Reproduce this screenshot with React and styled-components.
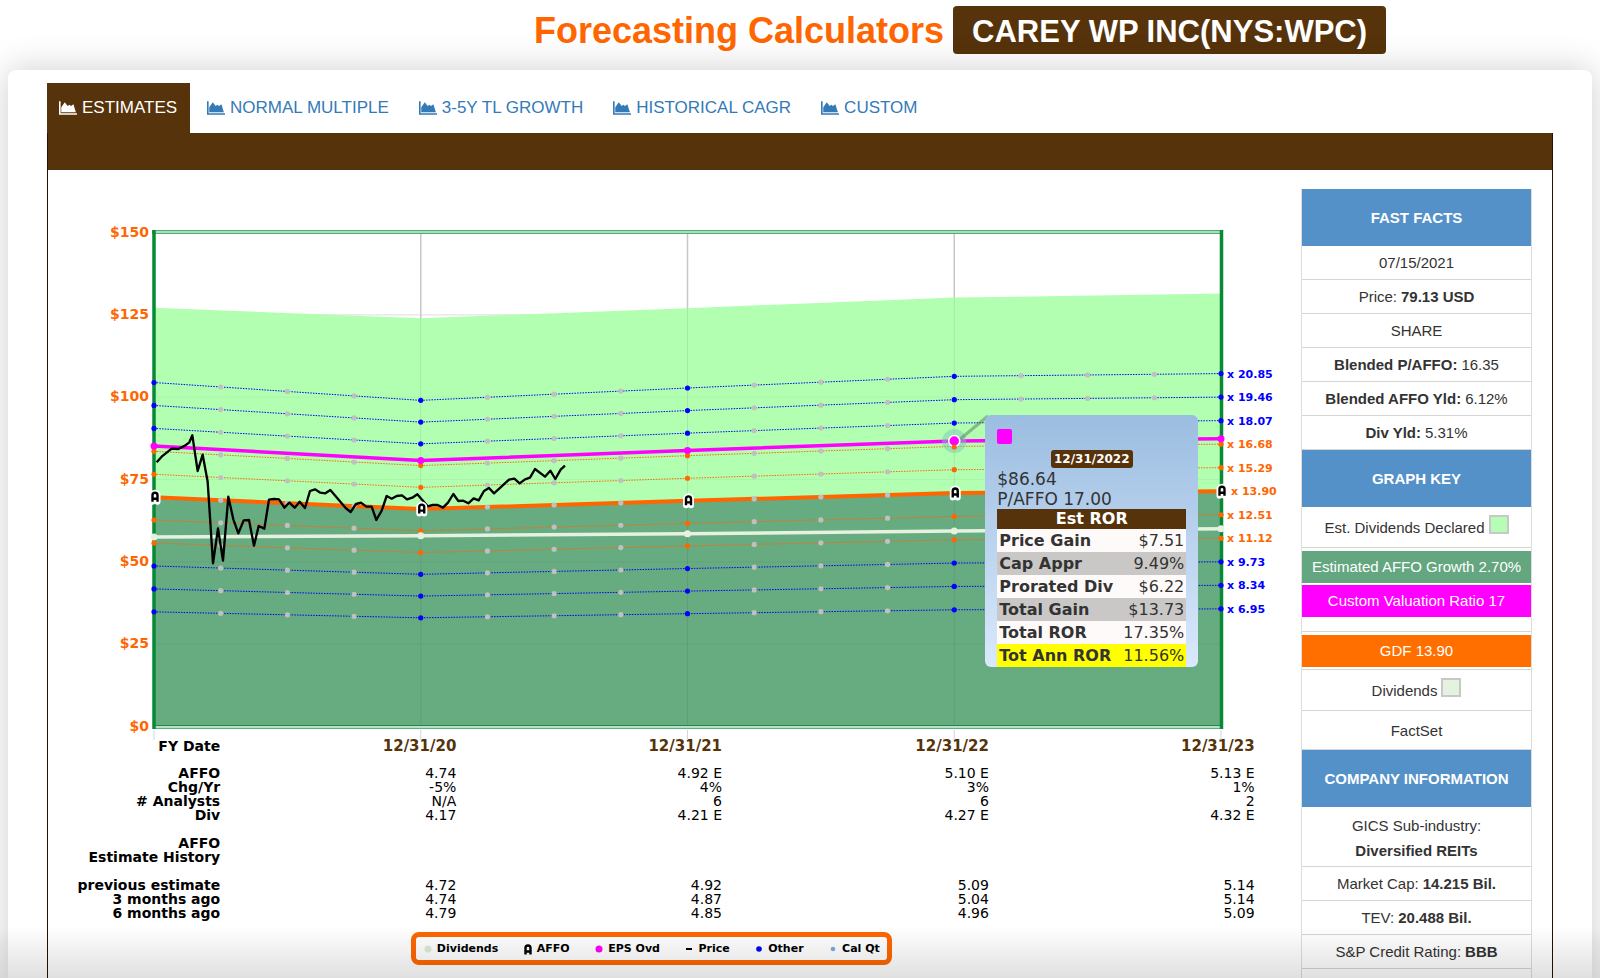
import React from "react";
import styled, { createGlobalStyle } from "styled-components";

const BROWN = "#56330a";
const ORANGE = "#ff6600";
const BLUE = "#0000ff";
const MAGENTA = "#ff00ff";
const UI = `"Liberation Sans", Arial, sans-serif`;
const CHART = `"DejaVu Sans", Verdana, sans-serif`;

const GlobalStyle = createGlobalStyle`
  *, *::before, *::after { box-sizing: border-box; }
  body { margin: 0; background: #fff; color: #333; font-family: ${UI}; }
`;

const Page = styled.div`
  min-height: 100vh;
  display: flex;
  flex-direction: column;
`;

const Header = styled.header`
  display: flex;
  align-items: center;
  justify-content: center;
  gap: 9px;
  padding: 6px 0 16px 20%;
`;

const Title = styled.h1`
  margin: 0;
  padding-top: 2px;
  color: ${ORANGE};
  font-size: 36px;
  line-height: 46px;
  font-weight: 700;
  white-space: nowrap;
`;

const CompanyBadge = styled.span`
  padding: 4px 19px 0;
  border-radius: 4px;
  background: ${BROWN};
  color: #fff;
  font-size: 31px;
  line-height: 44px;
  font-weight: 700;
  white-space: nowrap;
`;

const Card = styled.main`
  flex: 1;
  display: flex;
  flex-direction: column;
  margin: 0 8px;
  padding: 13px 39px 0;
  border-radius: 8px 8px 0 0;
  background: #fff;
  box-shadow: 0 0 36px rgba(0, 0, 0, 0.2);
`;

const Tabs = styled.nav`
  display: flex;
  gap: 5px;
`;

const Tab = styled.button`
  display: flex;
  align-items: center;
  gap: 5px;
  height: 50px;
  padding: 0 13px 0 12px;
  border: 0;
  background: ${(p) => (p.$active ? BROWN : "transparent")};
  color: ${(p) => (p.$active ? "#fff" : "#337ab7")};
  font: 17px ${UI};
  white-space: nowrap;
  cursor: pointer;
`;

const TabPanel = styled.section`
  flex: 1;
  display: flex;
  flex-direction: column;
  border: 1px solid #2b0f00;
  border-top: 0;
  border-bottom: 0;
`;

const Band = styled.div`
  height: 37px;
  background: ${BROWN};
`;

const Content = styled.div`
  flex: 1;
  display: grid;
  grid-template-columns: minmax(0, 1fr) 231px;
  gap: 7px;
  padding: 19px 20px 0 16px;
`;

const ChartColumn = styled.div`
  padding-top: 11px;
`;

const ChartArea = styled.div`
  position: relative;
`;

const ChartSvg = styled.svg`
  display: block;
  width: 100%;
  height: auto;
  font-family: ${CHART};
  font-weight: 700;
`;

const Tooltip = styled.div`
  position: absolute;
  left: 74.9%;
  top: 39.8%;
  width: 213px;
  display: flex;
  flex-direction: column;
  padding: 14px 12px 0;
  border-radius: 6px;
  background: linear-gradient(#9bbde0, #dae9fd);
  color: #333;
  font: 17px/20px ${CHART};
`;

const TooltipSwatch = styled.span`
  width: 15px;
  height: 15px;
  border-radius: 2px;
  background: ${MAGENTA};
`;

const TooltipDate = styled.strong`
  align-self: center;
  margin: 6px 0 1px;
  padding: 0 3px;
  border-radius: 3px;
  background: ${BROWN};
  color: #fff;
  font-size: 12px;
  line-height: 18px;
`;

const RorTable = styled.table`
  width: 100%;
  border-collapse: collapse;
  font-size: 16px;
  line-height: 23px;

  caption {
    background: ${BROWN};
    color: #fff;
    font-weight: 700;
    line-height: 20px;
  }
  th, td { padding: 0 2px; white-space: nowrap; }
  th { text-align: left; }
  td { text-align: right; }
`;

const RorRow = styled.tr`
  background: ${(p) => p.$fill};
`;

const EstimateTable = styled.table`
  width: 100%;
  table-layout: fixed;
  border-collapse: collapse;
  color: #000;
  font: 14px/14px ${CHART};

  th, td { padding: 0; text-align: right; white-space: nowrap; }
  tbody tr { height: 14px; }
  thead th {
    height: 26px;
    color: ${BROWN};
    font-size: 15px;
    line-height: 12px;
    vertical-align: top;
  }
  thead th:first-child { color: #000; font-size: 14px; }
`;

const Legend = styled.ul`
  display: flex;
  align-items: center;
  justify-content: space-between;
  width: 481px;
  height: 33px;
  margin: 12px 0 0 28.2%;
  padding: 0 7px;
  border: 5px solid ${ORANGE};
  border-radius: 8px;
  list-style: none;
  color: #000;
  font: 700 11px ${CHART};
`;

const LegendItem = styled.li`
  display: flex;
  align-items: center;
  gap: 4px;
`;

const Sidebar = styled.aside`
  display: flex;
  flex-direction: column;
  border: 1px solid #ddd;
  border-width: 0 1px;
  font-size: 15px;
  text-align: center;
`;

const SideHeading = styled.h2`
  margin: 0;
  background: #5491c9;
  color: #fff;
  font-size: 15px;
  line-height: 57px;
`;

const Fact = styled.div`
  display: flex;
  align-items: center;
  justify-content: center;
  gap: 4px;
  height: ${(p) => p.$height || 34}px;
  border-bottom: 1px solid #d5d5d5;
  white-space: nowrap;
`;

const StackedFact = styled(Fact)`
  flex-direction: column;
  gap: 0;
  height: auto;
  padding: 6px 0 3px;
  line-height: 25px;
`;

const KeyGroup = styled.div`
  display: flex;
  flex-direction: column;
  gap: 2px;
  padding: 3px 0 ${(p) => p.$after}px;
  border-bottom: 1px solid #d5d5d5;
`;

const KeyBar = styled.div`
  background: ${(p) => p.$fill};
  color: #fff;
  line-height: 32px;
  white-space: nowrap;
`;

const Swatch = styled.span`
  width: 20px;
  height: 19px;
  margin-bottom: 6px;
  border: 2px solid #c8c8c8;
  background: ${(p) => p.$fill};
`;

const BottomFade = styled.div`
  position: fixed;
  inset: auto 0 0;
  height: 52px;
  background: linear-gradient(rgba(0, 0, 0, 0), rgba(0, 0, 0, 0.12));
  pointer-events: none;
`;

function AreaIcon() {
  return (
    <svg width="18" height="16" viewBox="0 0 2048 1792" fill="currentColor" aria-hidden="true">
      <path d="M2048 1480v184H0V128h184v1352h1864zM1640 460l280 928H256V800l400-560 330 440 190-140 190 140z" />
    </svg>
  );
}

const TABS = ["ESTIMATES", "NORMAL MULTIPLE", "3-5Y TL GROWTH", "HISTORICAL CAGR", "CUSTOM"];

/* Chart scales: five fiscal year ends across, dollars up */
const LEFT = 90;
const RIGHT = 1157;
const BOTTOM = 526.5;
const xAt = (i) => LEFT + ((RIGHT - LEFT) / 4) * i;
const yAt = (v) => BOTTOM - v * 3.293;

const FAIR_MULTIPLE = 13.9;
const AFFO = [5.01, 4.75, 4.93, 5.1, 5.14];
const DIV = [4.14, 4.17, 4.21, 4.27, 4.32];
const MULTIPLES = [
  ["20.85", BLUE], ["19.46", BLUE], ["18.07", BLUE],
  ["16.68", ORANGE], ["15.29", ORANGE], ["13.90", ORANGE], ["12.51", ORANGE], ["11.12", ORANGE],
  ["9.73", BLUE], ["8.34", BLUE], ["6.95", BLUE],
];

const linePoints = (values) => values.map((v, i) => `${xAt(i)},${yAt(v)}`).join(" ");
const areaPoints = (values) => `${xAt(0)},${BOTTOM} ${linePoints(values)} ${xAt(4)},${BOTTOM}`;

const affoValues = AFFO.map((v) => v * FAIR_MULTIPLE);
const divValues = DIV.map((v) => v * FAIR_MULTIPLE);
const totalValues = affoValues.map((v, i) => v + divValues[i]);
const customValues = AFFO.map((v) => v * 17);

const PRICE =
  "80,127 95,110 110,98 125,86 145,87 165,77 178,67 187,46 203,153 218,104 233,185 249,430 264,325 279,422 295,230 310,298 325,340 341,301 357,300 372,377 386,318 403,326 417,239 432,237 447,238 463,263 478,248 494,263 509,245 525,264 540,213 555,208 571,218 586,220 601,210 647,264 662,276 678,252 693,248 709,260 725,260 739,300 755,272 770,228 785,236 800,228 816,226 831,238 847,233 862,223 893,259 908,255 923,255 939,263 954,248 970,222 985,243 1000,242 1015,250 1031,235 1046,241 1062,213 1077,204 1092,220 1115,199 1137,179 1153,176 1169,190 1185,178 1200,173 1215,147 1245,170 1261,152 1276,177 1292,149 1305,137";

function AMarker({ x, y, halo = true }) {
  const d = "M-2.5 4.5V-2a2.5 2.5 0 0 1 5 0V4.5M-2.5 1.5H2.5";
  return (
    <g transform={`translate(${x} ${y})`} fill="none">
      {halo && <path d={d} stroke="#fff" strokeWidth="6" strokeLinejoin="round" strokeLinecap="round" />}
      <path d={d} stroke="#000" strokeWidth="2.4" />
    </g>
  );
}

function MultipleLine({ label, color }) {
  const values = AFFO.map((v) => v * Number(label));
  const fair = label === "13.90";
  const quarters = [];
  for (let i = 0; i < 4; i++) {
    for (let q = 1; q < 4; q++) {
      const t = q / 4;
      quarters.push([xAt(i + t), yAt(values[i] * (1 - t) + values[i + 1] * t)]);
    }
  }
  return (
    <g>
      <polyline
        points={linePoints(values)}
        fill="none"
        stroke={color}
        strokeWidth={fair ? 4 : 1}
        strokeDasharray={fair ? undefined : "1.5 1.2"}
      />
      {quarters.map(([x, y]) => (
        <circle key={x} cx={x} cy={y} r="2.6" fill="#c0c0c0" />
      ))}
      {!fair && values.map((v, i) => <circle key={i} cx={xAt(i)} cy={yAt(v)} r="2.6" fill={color} />)}
      <text x={fair ? 1167 : 1163} y={yAt(values[4]) + 4} fontSize="11" fill={color}>
        x {label}
      </text>
    </g>
  );
}

function ForecastChart() {
  const hoverY = yAt(customValues[3]);
  return (
    <ChartSvg viewBox="0 0 1230 540" role="img" aria-label="Price and AFFO forecast">
      {[25, 50, 75, 100, 125].map((v) => (
        <path key={v} d={`M${LEFT} ${yAt(v)}H${RIGHT}`} stroke="#ddd" />
      ))}
      {[1, 2, 3].map((i) => (
        <path key={i} d={`M${xAt(i)} 33V${BOTTOM}`} stroke="#c8c8c8" strokeWidth="1.5" />
      ))}
      <polygon points={areaPoints(totalValues)} fill="#aeffae" fillOpacity="0.95" />
      <polygon points={areaPoints(affoValues)} fill="#63a67e" fillOpacity="0.95" />
      {[25, 50, 75, 100].map((v) => (
        <path key={v} d={`M${LEFT} ${yAt(v)}H${RIGHT}`} stroke="#000" strokeOpacity="0.04" />
      ))}
      {[1, 2, 3].map((i) => (
        <path key={i} d={`M${xAt(i)} ${yAt(totalValues[i])}V${BOTTOM}`} stroke="#000" strokeOpacity="0.07" />
      ))}

      <g fill="none">
        <path d={`M88 32H${RIGHT + 2}`} stroke="#4fae71" strokeWidth="4" />
        <path d={`M91 32H${RIGHT}`} stroke="#cdead7" strokeWidth="1.4" />
        <path d={`M90 525.5H${RIGHT}`} stroke="#159244" strokeWidth="1" />
        <path d={`M90 527H${RIGHT}`} stroke="#bfdccb" strokeWidth="2" />
        <path d={`M90 528.5H${RIGHT}`} stroke="#5fb27e" strokeWidth="1" />
        <path d={`M${LEFT} 30V529M${RIGHT + 0.5} 30V529`} stroke="#078a35" strokeWidth="3.5" />
        <path d={[0, 1, 2, 3, 4].map((i) => `M${xAt(i)} 530V540`).join("")} stroke="#ccd6eb" />
      </g>

      <g fontSize="14" fill={ORANGE} textAnchor="end">
        {[0, 25, 50, 75, 100, 125, 150].map((v) => (
          <text key={v} x="85" y={yAt(v) + 4}>${v}</text>
        ))}
      </g>

      {MULTIPLES.map(([label, color]) => (
        <MultipleLine key={label} label={label} color={color} />
      ))}

      <polyline points={linePoints(divValues)} fill="none" stroke="#e6f2df" strokeWidth="3.5" />
      {divValues.map((v, i) => <circle key={i} cx={xAt(i)} cy={yAt(v)} r="3.5" fill="#e6f2df" />)}

      <polyline points={linePoints(customValues)} fill="none" stroke={MAGENTA} strokeWidth="3.5" />
      {customValues.map((v, i) => <circle key={i} cx={xAt(i)} cy={yAt(v)} r="3.5" fill={MAGENTA} />)}

      <polyline
        points={PRICE}
        transform="translate(66 220) scale(0.33333)"
        fill="none"
        stroke="#000"
        strokeWidth="7"
        strokeLinejoin="round"
      />
      {affoValues.map((v, i) => <AMarker key={i} x={xAt(i) + 1} y={yAt(v)} />)}

      <circle cx={xAt(3)} cy={hoverY} r="12" fill="#7cc8b8" fillOpacity="0.5" />
      <circle cx={xAt(3)} cy={hoverY} r="5.5" fill={MAGENTA} stroke="#fff" strokeWidth="1.5" />
      <path d={`M${xAt(3) + 6} ${hoverY - 2}L924 216`} stroke="#557755" strokeOpacity="0.5" strokeWidth="3" />
      <circle cx={xAt(3)} cy={hoverY + 6} r="2.6" fill={ORANGE} />
    </ChartSvg>
  );
}

const ROR_ROWS = [
  ["Price Gain", "$7.51", "#fffafa"],
  ["Cap Appr", "9.49%", "#c9c8c7"],
  ["Prorated Div", "$6.22", "#fffafa"],
  ["Total Gain", "$13.73", "#c9c8c7"],
  ["Total ROR", "17.35%", "#fffafa"],
  ["Tot Ann ROR", "11.56%", "#ffff00"],
];

const ESTIMATE_ROWS = [
  ["AFFO", "4.74", "4.92 E", "5.10 E", "5.13 E"],
  ["Chg/Yr", "-5%", "4%", "3%", "1%"],
  ["# Analysts", "N/A", "6", "6", "2"],
  ["Div", "4.17", "4.21 E", "4.27 E", "4.32 E"],
  ["", "", "", "", ""],
  ["AFFO", "", "", "", ""],
  ["Estimate History", "", "", "", ""],
  ["", "", "", "", ""],
  ["previous estimate", "4.72", "4.92", "5.09", "5.14"],
  ["3 months ago", "4.74", "4.87", "5.04", "5.14"],
  ["6 months ago", "4.79", "4.85", "4.96", "5.09"],
];

const dot = (fill, r) => <circle cx="5" cy="6" r={r} fill={fill} />;
const LEGEND = [
  ["Dividends", dot("#dcecd5", 3.5)],
  ["AFFO", <AMarker x={5} y={7} halo={false} />],
  ["EPS Ovd", dot(MAGENTA, 3.5)],
  ["Price", <path d="M2 6H8" stroke="#000" strokeWidth="2" />],
  ["Other", dot(BLUE, 2.8)],
  ["Cal Qt", dot("#7cacdf", 2.3)],
];

export default function App() {
  return (
    <Page>
      <GlobalStyle />
      <Header>
        <Title>Forecasting Calculators</Title>
        <CompanyBadge>CAREY WP INC(NYS:WPC)</CompanyBadge>
      </Header>
      <Card>
        <Tabs>
          {TABS.map((name, i) => (
            <Tab key={name} type="button" $active={i === 0}>
              <AreaIcon />
              {name}
            </Tab>
          ))}
        </Tabs>
        <TabPanel>
          <Band />
          <Content>
            <ChartColumn>
              <ChartArea>
                <ForecastChart />
                <Tooltip role="tooltip">
                  <TooltipSwatch />
                  <TooltipDate>12/31/2022</TooltipDate>
                  <span>$86.64</span>
                  <span>P/AFFO 17.00</span>
                  <RorTable>
                    <caption>Est ROR</caption>
                    <tbody>
                      {ROR_ROWS.map(([name, value, fill]) => (
                        <RorRow key={name} $fill={fill}>
                          <th scope="row">{name}</th>
                          <td>{value}</td>
                        </RorRow>
                      ))}
                    </tbody>
                  </RorTable>
                </Tooltip>
              </ChartArea>
              <EstimateTable>
                <colgroup>
                  <col width="12.7%" />
                  <col width="19.2%" />
                  <col width="21.6%" />
                  <col width="21.7%" />
                  <col width="21.6%" />
                  <col />
                </colgroup>
                <thead>
                  <tr>
                    <th scope="col">FY Date</th>
                    <th scope="col">12/31/20</th>
                    <th scope="col">12/31/21</th>
                    <th scope="col">12/31/22</th>
                    <th scope="col">12/31/23</th>
                    <td />
                  </tr>
                </thead>
                <tbody>
                  {ESTIMATE_ROWS.map(([name, ...values], i) => (
                    <tr key={i}>
                      <th scope="row">{name}</th>
                      {values.map((v, j) => <td key={j}>{v}</td>)}
                      <td />
                    </tr>
                  ))}
                </tbody>
              </EstimateTable>
              <Legend>
                {LEGEND.map(([name, mark]) => (
                  <LegendItem key={name}>
                    <svg width="10" height="12" aria-hidden="true">{mark}</svg>
                    {name}
                  </LegendItem>
                ))}
              </Legend>
            </ChartColumn>
            <Sidebar>
              <SideHeading>FAST FACTS</SideHeading>
              <Fact>07/15/2021</Fact>
              <Fact>Price: <b>79.13 USD</b></Fact>
              <Fact>SHARE</Fact>
              <Fact><b>Blended P/AFFO:</b> 16.35</Fact>
              <Fact><b>Blended AFFO Yld:</b> 6.12%</Fact>
              <Fact><b>Div Yld:</b> 5.31%</Fact>
              <SideHeading>GRAPH KEY</SideHeading>
              <Fact $height={41}>Est. Dividends Declared <Swatch $fill="#b5ffb5" /></Fact>
              <KeyGroup $after={14}>
                <KeyBar $fill="#63a67f">Estimated AFFO Growth 2.70%</KeyBar>
                <KeyBar $fill={MAGENTA}>Custom Valuation Ratio 17</KeyBar>
              </KeyGroup>
              <KeyGroup $after={2}>
                <KeyBar $fill="#ff6f00">GDF 13.90</KeyBar>
              </KeyGroup>
              <Fact $height={41}>Dividends <Swatch $fill="#e3f3df" /></Fact>
              <Fact $height={39}>FactSet</Fact>
              <SideHeading>COMPANY INFORMATION</SideHeading>
              <StackedFact>
                <span>GICS Sub-industry:</span>
                <b>Diversified REITs</b>
              </StackedFact>
              <Fact>Market Cap: <b>14.215 Bil.</b></Fact>
              <Fact>TEV: <b>20.488 Bil.</b></Fact>
              <Fact>S&amp;P Credit Rating: <b>BBB</b></Fact>
            </Sidebar>
          </Content>
        </TabPanel>
      </Card>
      <BottomFade />
    </Page>
  );
}
